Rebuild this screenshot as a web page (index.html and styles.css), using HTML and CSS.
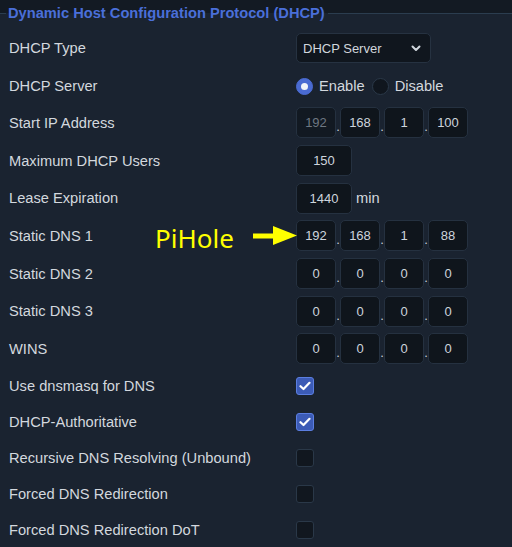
FILE: index.html
```html
<!DOCTYPE html>
<html lang="en">
<head>
  <meta charset="UTF-8" />
  <title>DHCP Settings</title>
  <link rel="stylesheet" href="styles.css">
</head>
<body>

<div class="page">
  <fieldset class="panel">
    <legend>Dynamic Host Configuration Protocol (DHCP)</legend>

    <div class="row row-select">
      <span class="label">DHCP Type</span>
      <div class="select">
        <span>DHCP Server</span>
        <svg class="chevron" width="10" height="7" viewBox="0 0 10 7"><path d="M1.5 1.5 L5 5 L8.5 1.5" fill="none" stroke="#d0d6dd" stroke-width="2" stroke-linecap="round" stroke-linejoin="round"/></svg>
      </div>
    </div>

    <div class="row row-short">
      <span class="label">DHCP Server</span>
      <div class="radios">
        <span class="radio on"></span><span class="radio-text">Enable</span>
        <span class="radio"></span><span class="radio-text">Disable</span>
      </div>
    </div>

    <div class="row">
      <span class="label">Start IP Address</span>
      <div class="ip">
        <span class="box disabled">192</span><span class="dot">.</span>
        <span class="box">168</span><span class="dot">.</span>
        <span class="box">1</span><span class="dot">.</span>
        <span class="box">100</span>
      </div>
    </div>

    <div class="row">
      <span class="label">Maximum DHCP Users</span>
      <span class="box wide">150</span>
    </div>

    <div class="row">
      <span class="label">Lease Expiration</span>
      <span class="box wide">1440</span><span class="unit">min</span>
    </div>

    <div class="row note-row">
      <span class="label">Static DNS 1</span>
      <div class="ip">
        <span class="box">192</span><span class="dot">.</span>
        <span class="box">168</span><span class="dot">.</span>
        <span class="box">1</span><span class="dot">.</span>
        <span class="box">88</span>
      </div>
      <div class="note">
        <span class="note-text">PiHole</span>
        <svg width="46" height="20" viewBox="0 0 46 20"><rect x="0" y="7.5" width="22" height="5" fill="#ffff00"/><polygon points="20,0 44,9.5 20,19" fill="#ffff00"/></svg>
      </div>
    </div>

    <div class="row">
      <span class="label">Static DNS 2</span>
      <div class="ip">
        <span class="box">0</span><span class="dot">.</span>
        <span class="box">0</span><span class="dot">.</span>
        <span class="box">0</span><span class="dot">.</span>
        <span class="box">0</span>
      </div>
    </div>

    <div class="row">
      <span class="label">Static DNS 3</span>
      <div class="ip">
        <span class="box">0</span><span class="dot">.</span>
        <span class="box">0</span><span class="dot">.</span>
        <span class="box">0</span><span class="dot">.</span>
        <span class="box">0</span>
      </div>
    </div>

    <div class="row">
      <span class="label">WINS</span>
      <div class="ip">
        <span class="box">0</span><span class="dot">.</span>
        <span class="box">0</span><span class="dot">.</span>
        <span class="box">0</span><span class="dot">.</span>
        <span class="box">0</span>
      </div>
    </div>

    <div class="row row-short">
      <span class="label">Use dnsmasq for DNS</span>
      <span class="check on"><svg width="12" height="10" viewBox="0 0 12 10"><path d="M1.5 5.2 L4.5 8 L10.5 1.8" fill="none" stroke="#fff" stroke-width="2.2" stroke-linecap="round" stroke-linejoin="round"/></svg></span>
    </div>

    <div class="row row-short">
      <span class="label">DHCP-Authoritative</span>
      <span class="check on"><svg width="12" height="10" viewBox="0 0 12 10"><path d="M1.5 5.2 L4.5 8 L10.5 1.8" fill="none" stroke="#fff" stroke-width="2.2" stroke-linecap="round" stroke-linejoin="round"/></svg></span>
    </div>

    <div class="row row-short">
      <span class="label">Recursive DNS Resolving (Unbound)</span>
      <span class="check"></span>
    </div>

    <div class="row row-short">
      <span class="label">Forced DNS Redirection</span>
      <span class="check"></span>
    </div>

    <div class="row row-short">
      <span class="label">Forced DNS Redirection DoT</span>
      <span class="check"></span>
    </div>
  </fieldset>
</div>

</body>
</html>
```

FILE: styles.css
```css
* {
  box-sizing: border-box;
}

html, body {
  margin: 0;
  padding: 0;
  height: 100%;
  background: #131a23;
}

body {
  font-family: 'Liberation Sans', Arial, sans-serif;
  font-size: 11pt;
  color: #d3d8de;
}

.page {
  padding-top: 5px;
  min-height: 100%;
  display: flex;
}

.panel {
  flex: 1;
  margin: 0;
  padding: 6px 0 0 9px;
  border: none;
  border-top: 1px solid #2b3d4f;
  background: #1a2330;
  min-width: 0;
}

.panel legend {
  margin-left: -3px;
  padding: 0 3px 0 2px;
  font-weight: bold;
  font-size: 11pt;
  line-height: 17px;
  color: #4a6fd9;
}

.row {
  display: flex;
  align-items: center;
  height: 37.7px;
}

.row-select {
  height: 40px;
}

.row-short {
  height: 36px;
}

.label {
  width: 287px;
  flex-shrink: 0;
}

.select {
  width: 135px;
  height: 30px;
  display: flex;
  align-items: center;
  justify-content: space-between;
  padding: 0 9px 0 6px;
  background: #10161e;
  border: 1px solid #263241;
  border-radius: 5px;
  font-size: 13px;
  color: #d0d6dd;
}

.radios {
  display: flex;
  align-items: center;
}

.radio {
  width: 17px;
  height: 17px;
  border-radius: 50%;
  background: #10161e;
  border: 1px solid #2a3848;
  position: relative;
}

.radio.on {
  background: #4a6bd2;
  border-color: #4a6bd2;
}

.radio.on::after {
  content: "";
  position: absolute;
  left: 4px;
  top: 4px;
  width: 7px;
  height: 7px;
  border-radius: 50%;
  background: #f2f4f8;
}

.radio-text {
  margin: 0 7px 0 6px;
}

.ip {
  display: flex;
  align-items: center;
}

.box {
  width: 40px;
  height: 31px;
  display: flex;
  align-items: center;
  justify-content: center;
  background: #0f151c;
  border: 1px solid #253140;
  border-radius: 5px;
  font-size: 13px;
  color: #cdd4dc;
}

.box.wide {
  width: 56px;
}

.box.disabled {
  background: #121922;
  color: #6e7782;
}

.dot {
  width: 4px;
  text-align: center;
  font-size: 13px;
  line-height: 1;
  padding-top: 8px;
  color: #cdd4dc;
}

.unit {
  margin-left: 4px;
}

.check {
  width: 18px;
  height: 18px;
  display: flex;
  align-items: center;
  justify-content: center;
  background: #11171f;
  border: 1px solid #2a3848;
  border-radius: 3px;
}

.check.on {
  background: #3c5bb6;
  border-color: #5b7ee0;
}

.note-row {
  position: relative;
}

.note {
  position: absolute;
  left: 146px;
  top: 0;
  height: 100%;
  display: flex;
  align-items: center;
}

.note-text {
  font-family: 'Noto Sans', sans-serif;
  font-size: 26px;
  color: #ffff00;
  margin-right: 19px;
  line-height: 1;
  padding-top: 4px;
}
```
